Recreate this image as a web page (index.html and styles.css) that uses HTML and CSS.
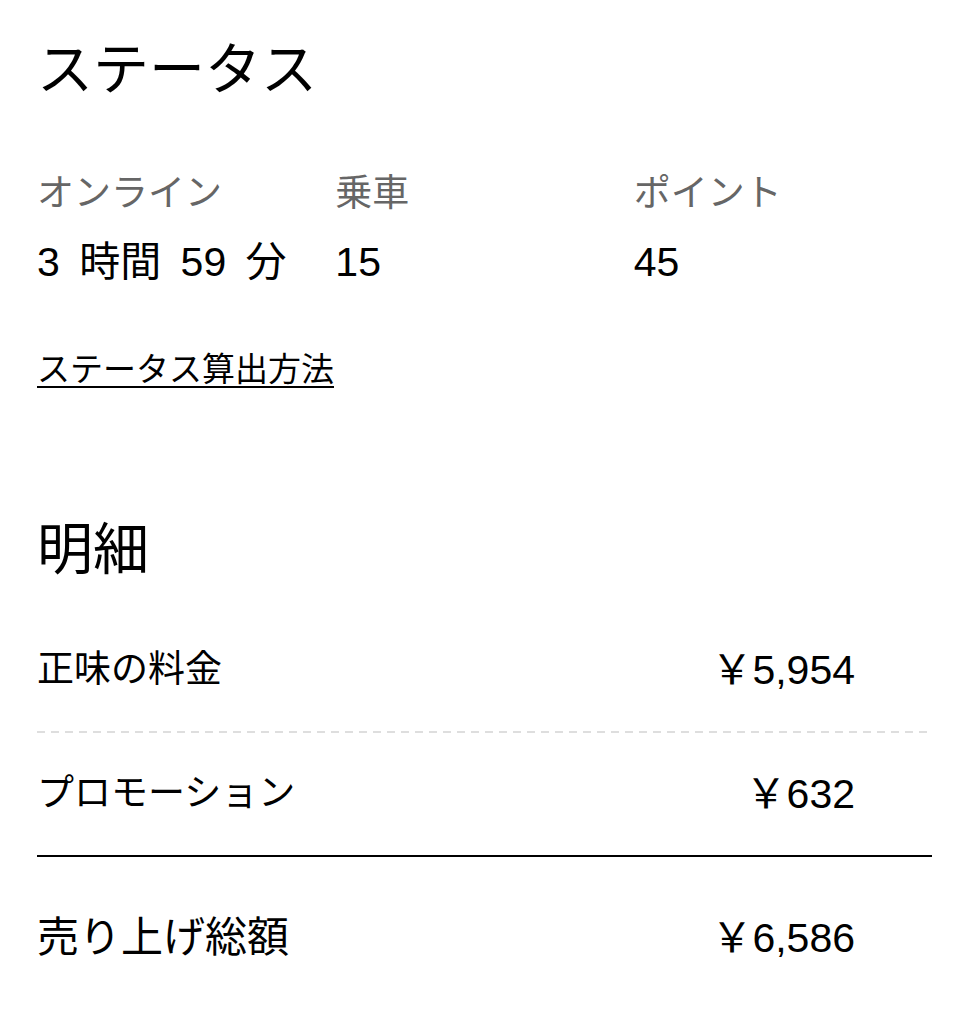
FILE: index.html
```html
<!DOCTYPE html>
<html lang="ja">
<head>
<meta charset="utf-8">
<title>ステータス</title>
<link rel="stylesheet" href="styles.css">
</head>
<body>
<main class="page">
  <h1 class="title">ステータス</h1>
  <section class="stats">
    <div class="stat">
      <div class="stat-label">オンライン</div>
      <div class="stat-value">3 時間 59 分</div>
    </div>
    <div class="stat">
      <div class="stat-label">乗車</div>
      <div class="stat-value">15</div>
    </div>
    <div class="stat">
      <div class="stat-label">ポイント</div>
      <div class="stat-value">45</div>
    </div>
  </section>
  <a class="link" href="#">ステータス算出方法</a>
  <h2 class="title section-title">明細</h2>
  <section class="rows">
    <div class="row row-dashed">
      <span class="row-label">正味の料金</span>
      <span class="row-amount">￥5,954</span>
    </div>
    <div class="row row-solid">
      <span class="row-label">プロモーション</span>
      <span class="row-amount">￥632</span>
    </div>
    <div class="row row-total">
      <span class="row-label">売り上げ総額</span>
      <span class="row-amount">￥6,586</span>
    </div>
  </section>
</main>
</body>
</html>
```
FILE: styles.css
```css
* { box-sizing: border-box; }
html, body { margin: 0; padding: 0; background: #fff; }
body {
  font-family: "Liberation Sans", "Noto Sans CJK JP", sans-serif;
  color: #000;
}
.page {
  padding: 0 39px 0 37px;
  display: flex;
  flex-direction: column;
  align-items: stretch;
}
.title {
  font-size: 56px;
  line-height: 72px;
  font-weight: 400;
  margin: 34px 0 0;
}
.stats {
  display: grid;
  grid-template-columns: repeat(3, 1fr);
  margin-top: 66px;
}
.stat-label {
  font-size: 37px;
  line-height: 44px;
  color: #666;
}
.stat-value {
  font-size: 41px;
  line-height: 52px;
  margin-top: 20px;
  word-spacing: 8px;
}
.link {
  align-self: flex-start;
  margin-top: 60px;
  font-size: 33px;
  line-height: 44px;
  color: #000;
  text-decoration: underline;
  text-decoration-thickness: 2px;
  text-underline-offset: 5px;
}
.section-title {
  margin-top: 122px;
}
.rows {
  margin-top: 23px;
  display: flex;
  flex-direction: column;
}
.row {
  display: flex;
  justify-content: space-between;
  align-items: center;
  padding: 39px 0;
  line-height: 44px;
}
.row-label { font-size: 37px; }
.row-amount {
  font-size: 41px;
  padding-right: 77px;
}
.row-dashed {
  background: repeating-linear-gradient(90deg, #dedede 0 8px, transparent 8px 14px) left bottom / 100% 2px no-repeat;
  padding-bottom: 41px;
}
.row-solid {
  border-bottom: 2px solid #000;
}
.row-total {
  padding-top: 59px;
}
.row-total .row-label { font-size: 42px; }
```
